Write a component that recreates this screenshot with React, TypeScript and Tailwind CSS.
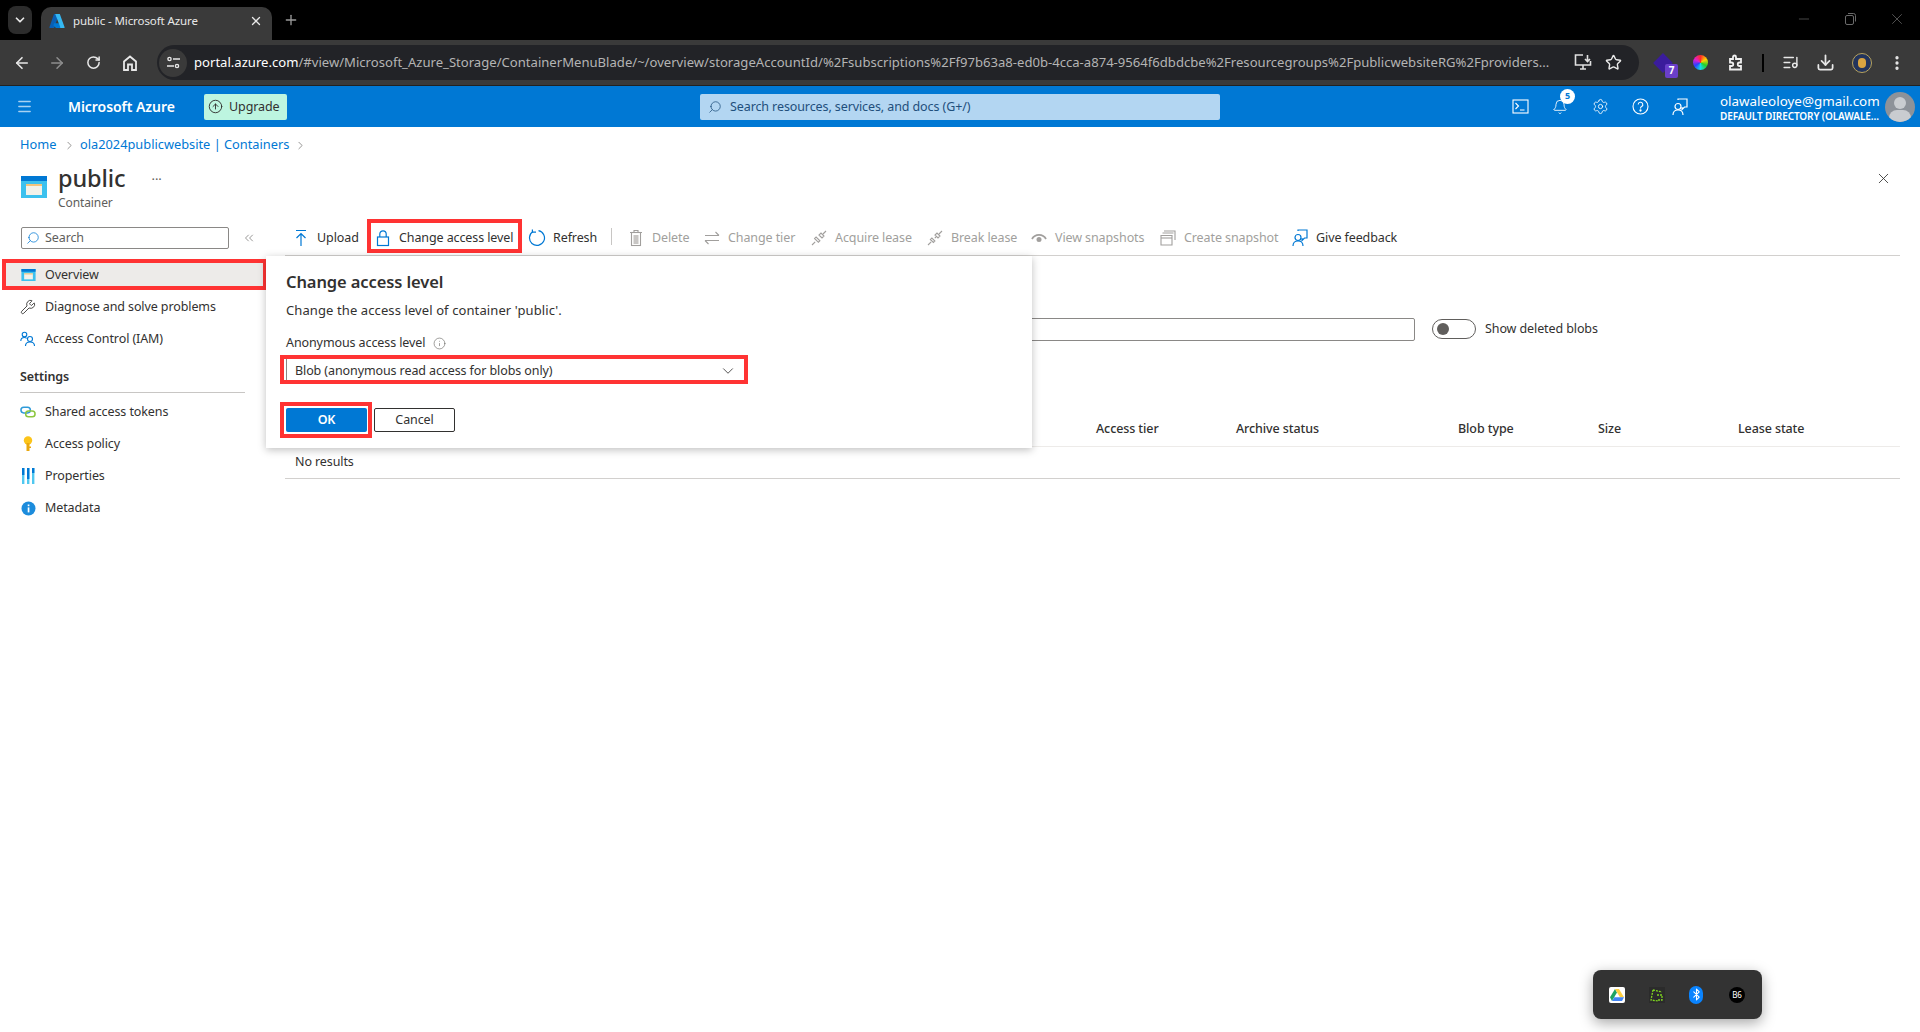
import React from "react";
import {
  ArrowLeft, ArrowRight, RotateCw, Star, X, Plus, ChevronDown, ChevronRight, Menu, Bell, Settings, Info, Search, Bluetooth, ListMusic, Download, EllipsisVertical, Wrench, ChevronsLeft, Minus, ArrowUpCircle,
} from "lucide-react";

const AzureLogo = () => (
  <svg width="16" height="16" viewBox="0 0 16 16">
    <path d="M5.6 1h4.4L5.3 14.4a.8.8 0 0 1-.8.6H1a.6.6 0 0 1-.6-.8L4.8 1.6A.8.8 0 0 1 5.6 1z" fill="#0a5fb4" />
    <path d="M11.9 10.2H5l-.6 2.2 2.6 2.6h6.3z" fill="#0078d4" />
    <path d="M6.2 1h4.6l4.8 13.2a.6.6 0 0 1-.6.8h-4.2a.8.8 0 0 0 .5-.8z" fill="#35b8f2" />
  </svg>
);

const ContainerIcon = ({ w, h }: { w: number; h: number }) => (
  <svg width={w} height={h} viewBox="0 0 26 22">
    <rect x="0" y="0" width="26" height="22" fill="#3cc1ee" />
    <rect x="0" y="0" width="26" height="5" fill="#0078d4" />
    <rect x="5" y="8" width="16" height="11" fill="#f2f2ea" />
    <rect x="5" y="8" width="16" height="2" fill="#f3c47c" />
  </svg>
);

const ChromeBtn = ({ children, className }: { children: React.ReactNode; className?: string }) => (
  <span className={"flex h-[24px] w-[24px] shrink-0 items-center justify-center " + (className ?? "")}>{children}</span>
);

const Upload = () => (
  <svg width="16" height="18" viewBox="0 0 16 18" fill="none" stroke="#0078d4" strokeWidth="1.2">
    <path d="M3 1.5h10M8 17V5M3.5 9L8 4.5 12.5 9" />
  </svg>
);
const Lock = () => (
  <svg width="16" height="18" viewBox="0 0 16 18" fill="none" stroke="#0078d4" strokeWidth="1.2">
    <rect x="2.5" y="8" width="11" height="8.5" />
    <path d="M4.8 8V5a3.2 3.2 0 0 1 6.4 0v3" />
  </svg>
);
const Refresh = () => (
  <svg width="18" height="18" viewBox="0 0 18 18" fill="none" stroke="#0078d4" strokeWidth="1.2" className="shrink-0">
    <path d="M5 2.6A7.5 7.5 0 1 0 10.5 1.6" />
    <path d="M4.4 0.6V3.2H8" />
  </svg>
);
const Trash = () => (
  <svg width="16" height="18" viewBox="0 0 16 18" fill="none" stroke="#a19f9d" strokeWidth="1.1">
    <path d="M2 3.5h12M6 3.5V1.5h4v2" />
    <rect x="3.5" y="3.5" width="9" height="13" />
    <rect x="5.5" y="6" width="5" height="9" fill="#c8c6c4" stroke="none" />
  </svg>
);
const Swap = () => (
  <svg width="16" height="16" viewBox="0 0 16 16" fill="none" stroke="#a19f9d" strokeWidth="1.1">
    <path d="M1 5.5h14M11.5 2l3.5 3.5M15 10.5H1M4.5 14L1 10.5" />
  </svg>
);
const Plug = ({ broken }: { broken?: boolean }) => (
  <svg width="16" height="16" viewBox="0 0 16 16" fill="none" stroke="#a19f9d" strokeWidth="1.1">
    <path d="M1 15l3.2-3.2" />
    <path d={broken ? "M3.4 9.5l3 3 1.5-1.5-3-3zM9 7l-1.2 1.2" : "M3.6 8.5l3.8 3.8 1.5-1.5-3.8-3.8z"} />
    <path d="M8 5l3 3 2-2-3-3zM12 4l3-3" />
  </svg>
);
const Eye = () => (
  <svg width="16" height="12" viewBox="0 0 16 12" fill="none">
    <path d="M1 7a8 8 0 0 1 14 0" stroke="#a19f9d" strokeWidth="1.8" />
    <circle cx="8" cy="7.5" r="2.5" fill="#a19f9d" />
  </svg>
);
const Snapshot = () => (
  <svg width="16" height="16" viewBox="0 0 16 16" fill="none" stroke="#a19f9d" strokeWidth="1.1">
    <path d="M4 1h11v9M2.5 3h11M1 5.5h11v9.5H1z" />
    <path d="M1 8h11" />
  </svg>
);
const Feedback = ({ color, w = 16, h = 18 }: { color: string; w?: number; h?: number }) => (
  <svg width={w} height={h} viewBox="0 0 16 18" fill="none" stroke={color} strokeWidth="1.2">
    <circle cx="6" cy="8.5" r="3" />
    <path d="M1 17c0-3 2-5 5-5s5 2 5 5" />
    <path d="M6 2V1h9v8h-2.5L10 11.5V9" />
  </svg>
);

const ToolItem = ({ icon, label, w, disabled, boxed }: { icon: React.ReactNode; label: string; w: number; disabled?: boolean; boxed?: boolean }) => (
  <div className="relative mt-[1px] flex h-[36px] shrink-0 items-center gap-[8px]">
    {boxed && <span className="absolute left-[-8px] right-[-9px] top-[-1px] h-[34px] border-[4px] border-[#ff3333]" />}
    <span className="flex h-[18px] w-[16px] items-center justify-center">{icon}</span>
    <span style={{ width: w }} className={"whitespace-nowrap " + (disabled ? "text-[#a19f9d]" : "text-[#323130]")}>{label}</span>
  </div>
);

const NavRow = ({ icon, label }: { icon: React.ReactNode; label: string }) => (
  <div className="flex h-[32px] items-center pl-[20px] text-[#323130]">
    <span className="flex w-[16px] items-center justify-center">{icon}</span>
    <span className="ml-[9px] whitespace-nowrap">{label}</span>
  </div>
);

const Iam = () => (
  <svg width="16" height="16" viewBox="0 0 16 16" fill="none" stroke="#0078d4" strokeWidth="1.1">
    <circle cx="4.5" cy="3.5" r="2.3" />
    <path d="M0.8 10c0-2 1.5-3.5 3.7-3.5 1 0 1.6.3 2.2.8" />
    <circle cx="10" cy="8" r="2.5" />
    <path d="M5.5 15c0-2.5 2-4 4.5-4s4.5 1.5 4.5 4" />
  </svg>
);
const Tokens = () => (
  <svg width="17" height="12" viewBox="0 0 17 12" fill="none" strokeWidth="1.6">
    <rect x="1" y="1" width="10" height="6" rx="3" stroke="#2f9bd9" />
    <rect x="6" y="5" width="10" height="6" rx="3" stroke="#8cc63f" />
  </svg>
);
const Key = () => (
  <svg width="12" height="16" viewBox="0 0 12 16">
    <circle cx="6" cy="4.5" r="4.2" fill="#fcc419" />
    <rect x="4.5" y="7" width="3" height="8" fill="#e9a80e" />
    <rect x="7" y="10.5" width="2" height="1.5" fill="#e9a80e" />
  </svg>
);
const Bars = () => (
  <svg width="14" height="16" viewBox="0 0 14 16">
    <rect x="1" y="0" width="2.4" height="16" fill="#50c8f0" />
    <rect x="1" y="0" width="2.4" height="7" fill="#0078d4" />
    <rect x="6" y="0" width="2.4" height="16" fill="#50c8f0" />
    <rect x="6" y="0" width="2.4" height="11" fill="#0078d4" />
    <rect x="11" y="0" width="2.4" height="16" fill="#50c8f0" />
    <rect x="11" y="0" width="2.4" height="5" fill="#0078d4" />
  </svg>
);
const InfoFilled = () => (
  <svg width="15" height="15" viewBox="0 0 15 15">
    <circle cx="7.5" cy="7.5" r="7" fill="#1c8cdc" />
    <rect x="6.7" y="6.4" width="1.7" height="5" fill="#fff" />
    <rect x="6.7" y="3.5" width="1.7" height="1.7" fill="#fff" />
  </svg>
);

export default function App() {
  return (
    <div className="flex h-[1032px] w-[1920px] flex-col overflow-hidden bg-white font-['Noto_Sans',sans-serif] text-[12.5px] tracking-[-0.1px] text-[#323130]">
      {/* Tab strip */}
      <div className="flex h-[40px] shrink-0 items-end bg-black pl-[8px] text-[#e8e8e8]">
        <div className="mb-[6px] flex h-[28px] w-[24px] shrink-0 items-center justify-center rounded-[8px] bg-[#2c2c2c]">
          <ChevronDown size={14} strokeWidth={3} />
        </div>
        <div className="ml-[9px] flex h-[33px] w-[231px] shrink-0 items-center rounded-t-[10px] bg-[#3a3a3a] pb-[6px] pl-[8px] pr-[9px]">
          <AzureLogo />
          <span className="ml-[8px] flex-1 text-[11.5px]">public - Microsoft Azure</span>
          <X size={14} strokeWidth={2.2} />
        </div>
        <Plus size={16} className="mb-[12px] ml-[11px] text-[#9a9a9a]" />
        <div className="mb-[12px] ml-auto flex items-center gap-[31px] pr-[14px] text-[#6a6a6a]">
          <Minus size={16} strokeWidth={1} />
          <svg width="14" height="14" viewBox="0 0 14 14" fill="none" stroke="#6a6a6a"><rect x="2.5" y="3.5" width="8" height="9" rx="1.5" /><path d="M5 1.5h5.5a2 2 0 0 1 2 2v6" /></svg>
          <X size={18} strokeWidth={1} />
        </div>
      </div>

      {/* Chrome toolbar */}
      <div className="flex h-[46px] shrink-0 items-center border-b border-[#222] bg-[#3a3a3a] pl-[10px] pr-[10px] text-[#e8e8e8]">
        <ChromeBtn><ArrowLeft size={18} strokeWidth={2.2} /></ChromeBtn>
        <ChromeBtn className="ml-[11px] text-[#8e8e8e]"><ArrowRight size={18} /></ChromeBtn>
        <ChromeBtn className="ml-[12px]"><RotateCw size={15} strokeWidth={2.4} /></ChromeBtn>
        <ChromeBtn className="ml-[13px]">
          <svg width="16" height="16" viewBox="0 0 16 16" fill="none" stroke="#e8e8e8" strokeWidth="1.8"><path d="M2 15V6.5L8 1.5l6 5V15H10V9.5H6V15z" /></svg>
        </ChromeBtn>
        <div className="ml-[15px] flex h-[35px] w-[1482px] shrink-0 items-center rounded-full bg-[#222327] pl-[2px]">
          <span className="flex h-[28px] w-[28px] shrink-0 items-center justify-center rounded-full bg-[#3a3a3a]">
            <svg width="15" height="13" viewBox="0 0 15 13" fill="none" stroke="#e8e8e8" strokeWidth="1.4"><circle cx="3.5" cy="3" r="1.6" /><path d="M7 3h7M1 10h7" /><circle cx="11" cy="10" r="1.6" /></svg>
          </span>
          <span className="ml-[7px] w-[1368px] shrink-0 overflow-hidden whitespace-nowrap text-[13.1px] tracking-normal text-[#b4b4b4]">
            <span className="text-white">portal.azure.com</span>/#view/Microsoft_Azure_Storage/ContainerMenuBlade/~/overview/storageAccountId/%2Fsubscriptions%2Ff97b63a8-ed0b-4cca-a874-9564f6dbdcbe%2Fresourcegroups%2FpublicwebsiteRG%2Fproviders...
          </span>
          <span className="ml-[11px] flex w-[20px] shrink-0 justify-center">
            <svg width="18" height="17" viewBox="0 0 18 17" fill="none" stroke="#e0e0e0" strokeWidth="1.6"><path d="M9 1H1.5v10h15V7M6 15h6M9 11v4M13.5 1v6M11 5l2.5 2.5L16 5" /></svg>
          </span>
          <Star size={17} strokeWidth={2} className="ml-[12px] shrink-0" />
        </div>
        <span className="relative ml-[12px] flex h-[24px] w-[24px] shrink-0 items-center justify-center">
          <span className="h-[14px] w-[14px] rotate-45 bg-[#3a1c9c]" />
          <span className="absolute bottom-[-3px] right-[-3px] flex h-[14px] w-[13px] items-center justify-center rounded-[2px] bg-[#6a3fc9] text-[10px] font-bold text-white">7</span>
        </span>
        <span className="ml-[13px] flex h-[24px] w-[24px] shrink-0 items-center justify-center">
          <span className="h-[15px] w-[15px] rounded-full bg-[conic-gradient(#ff2a2a,#ffd400,#22d02a,#14d8e8,#2a40ff,#e020d0,#ff2a2a)]" />
        </span>
        <span className="ml-[11px] flex h-[24px] w-[24px] shrink-0 items-center justify-center">
          <svg width="17" height="17" viewBox="0 0 17 17" fill="none" stroke="#f0f0f0" strokeWidth="1.8"><path d="M3 5h3V3a1.5 1.5 0 0 1 3 0v2h5v3.5h-1.5a1.7 1.7 0 0 0 0 3.5H14v3.5H3V12h1.5a1.7 1.7 0 0 0 0-3.5H3z" /></svg>
        </span>
        <span className="ml-[15px] h-[18px] w-[2px] shrink-0 bg-black" />
        <ChromeBtn className="ml-[14px]"><ListMusic size={17} strokeWidth={2} /></ChromeBtn>
        <ChromeBtn className="ml-[11px]"><Download size={19} strokeWidth={2.2} /></ChromeBtn>
        <span className="ml-[15px] flex h-[20px] w-[20px] shrink-0 items-center justify-center rounded-full border border-[#b8a35c] bg-[#23345c]"><span className="h-[10px] w-[8px] rounded-full bg-[#d9a441]" /></span>
        <ChromeBtn className="ml-[13px]"><EllipsisVertical size={18} strokeWidth={2.4} /></ChromeBtn>
      </div>

      {/* Azure nav */}
      <div className="flex h-[41px] shrink-0 items-center bg-[#0078d4] text-white">
        <Menu size={17} className="ml-[16px] shrink-0 text-[#a8d2f2]" />
        <span className="ml-[35px] w-[109px] shrink-0 whitespace-nowrap text-[14px] font-semibold tracking-[-0.05px]">Microsoft Azure</span>
        <div className="ml-[27px] flex h-[26px] w-[83px] shrink-0 items-center rounded-[2px] bg-[#bdf5e0] pl-[4px] text-[#323130]">
          <ArrowUpCircle size={15} strokeWidth={1.5} />
          <span className="ml-[6px] mt-[1px]">Upgrade</span>
        </div>
        <div className="ml-[413px] flex h-[26px] w-[520px] shrink-0 items-center rounded-[2px] bg-[#b3d6f2] pl-[8px] text-[#1f4f7c]">
          <Search size={14} strokeWidth={1.3} className="-scale-x-100" />
          <span className="ml-[8px] mt-[1px]">Search resources, services, and docs (G+/)</span>
        </div>
        <div className="ml-[285px] flex h-[30px] w-[30px] shrink-0 items-center justify-center">
          <svg width="17" height="15" viewBox="0 0 17 15" fill="none" stroke="#fff" strokeWidth="1.1"><rect x="1" y="1" width="15" height="13" /><path d="M3.5 4l3 3-3 3M8 11h4.5" /></svg>
        </div>
        <div className="relative ml-[10px] flex h-[30px] w-[30px] shrink-0 items-center justify-center">
          <Bell size={16} strokeWidth={1.3} />
          <span className="absolute right-[0px] top-[-3px] flex h-[15px] w-[15px] items-center justify-center rounded-full bg-white text-[9px] font-bold text-[#0078d4]">5</span>
        </div>
        <div className="ml-[10px] flex h-[30px] w-[30px] shrink-0 items-center justify-center"><Settings size={17} strokeWidth={1.2} /></div>
        <div className="ml-[10px] flex h-[30px] w-[30px] shrink-0 items-center justify-center">
          <svg width="17" height="17" viewBox="0 0 17 17" fill="none" stroke="#fff" strokeWidth="1.1"><circle cx="8.5" cy="8.5" r="7.5" /><path d="M6.2 6.6a2.3 2.3 0 1 1 3.4 2c-.8.4-1.1 1-1.1 1.9" /><circle cx="8.5" cy="12.5" r=".6" fill="#fff" /></svg>
        </div>
        <div className="ml-[10px] flex h-[30px] w-[30px] shrink-0 items-center justify-center"><Feedback color="#fff" /></div>
        <div className="ml-[25px] mt-[5px] flex w-[160px] shrink-0 flex-col items-start leading-[15px]">
          <span className="whitespace-nowrap text-[13.4px] tracking-normal">olawaleoloye@gmail.com</span>
          <span className="whitespace-nowrap text-[10px] font-semibold">DEFAULT DIRECTORY (OLAWALE...</span>
        </div>
        <div className="relative ml-[5px] h-[30px] w-[30px] shrink-0 overflow-hidden rounded-full bg-[#8d9299]">
          <span className="absolute left-[9px] top-[5px] h-[12px] w-[12px] rounded-full bg-[#c9ccd0]" />
          <span className="absolute left-[4px] top-[18px] h-[16px] w-[22px] rounded-full bg-[#c9ccd0]" />
        </div>
      </div>

      {/* Portal content */}
      <div className="relative flex flex-1 flex-col">
        <div className="flex h-[36px] shrink-0 items-center pl-[20px] text-[12.8px] tracking-normal text-[#0078d4]">
          <span className="w-[38px] whitespace-nowrap">Home</span>
          <ChevronRight size={13} className="ml-[5px] text-[#605e5c]" strokeWidth={1.2} />
          <span className="ml-[4px] w-[210px] whitespace-nowrap">ola2024publicwebsite | Containers</span>
          <ChevronRight size={13} className="ml-[4px] text-[#605e5c]" strokeWidth={1.2} />
        </div>

        <div className="flex h-[56px] shrink-0 items-start pl-[21px] pr-[28px]">
          <div className="mt-[13px]"><ContainerIcon w={26} h={22} /></div>
          <div className="ml-[11px] flex flex-col">
            <span className="h-[30px] text-[23.5px] font-medium leading-[30px]">public</span>
            <span className="mt-[2px] text-[12px] leading-[16px] text-[#605e5c]">Container</span>
          </div>
          <span className="ml-[26px] mt-[8px] text-[13px] leading-[16px] text-[#605e5c]">···</span>
          <X size={17} strokeWidth={1.2} className="ml-auto mt-[7px] text-[#323130]" />
        </div>

        <div className="flex flex-1">
          {/* Sidebar */}
          <div className="flex w-[268px] shrink-0 flex-col">
            <div className="ml-[21px] mt-[8px] flex h-[22px] items-center">
              <div className="flex h-[22px] w-[208px] items-center rounded-[2px] border border-[#8a8886] pl-[4px] text-[#605e5c]">
                <Search size={14} strokeWidth={1.3} className="-scale-x-100 text-[#0078d4]" />
                <span className="ml-[5px] mt-[1px]">Search</span>
              </div>
              <ChevronsLeft size={14} strokeWidth={1.1} className="ml-[13px] text-[#605e5c]" />
            </div>
            <div className="ml-[2px] mt-[10px] flex h-[31px] w-[265px] items-center border-[4px] border-[#ff3333] bg-[#edebe9] pl-[15px]">
              <ContainerIcon w={15} h={12} />
              <span className="ml-[9px] mt-[1px] whitespace-nowrap">Overview</span>
            </div>
            <div className="mt-[1px]">
              <NavRow icon={<Wrench size={16} strokeWidth={1.3} />} label="Diagnose and solve problems" />
              <NavRow icon={<Iam />} label="Access Control (IAM)" />
            </div>
            <div className="ml-[20px] mt-[12px] h-[26px] w-[225px] border-b border-[#c8c6c4] font-semibold leading-[20px]">Settings</div>
            <div className="mt-[3px]">
              <NavRow icon={<Tokens />} label="Shared access tokens" />
              <NavRow icon={<Key />} label="Access policy" />
              <NavRow icon={<Bars />} label="Properties" />
              <NavRow icon={<InfoFilled />} label="Metadata" />
            </div>
          </div>

          {/* Main */}
          <div className="flex flex-1 flex-col pl-[17px] pr-[20px]">
            <div className="flex h-[37px] shrink-0 items-start gap-[16px] border-b border-[#d2d0ce] pl-[8px]">
              <ToolItem icon={<Upload />} label="Upload" w={42} />
              <ToolItem icon={<Lock />} label="Change access level" w={114} boxed />
              <ToolItem icon={<Refresh />} label="Refresh" w={42} />
              <span className="mt-[9px] h-[17px] w-px bg-[#c8c6c4]" />
              <ToolItem icon={<Trash />} label="Delete" w={36} disabled />
              <ToolItem icon={<Swap />} label="Change tier" w={67} disabled />
              <ToolItem icon={<Plug />} label="Acquire lease" w={76} disabled />
              <ToolItem icon={<Plug broken />} label="Break lease" w={64} disabled />
              <ToolItem icon={<Eye />} label="View snapshots" w={89} disabled />
              <ToolItem icon={<Snapshot />} label="Create snapshot" w={92} disabled />
              <ToolItem icon={<Feedback color="#0078d4" />} label="Give feedback" w={81} />
            </div>

            <div className="mt-[61px] flex h-[24px] shrink-0 items-center">
              <div className="h-[23px] w-[1130px] rounded-[2px] border border-[#8a8886]" />
              <div className="ml-[17px] flex h-[20px] w-[44px] items-center rounded-full border border-[#605e5c] pl-[4px]">
                <span className="h-[12px] w-[12px] rounded-full bg-[#605e5c]" />
              </div>
              <span className="ml-[9px] mt-[1px] whitespace-nowrap text-[#323130]">Show deleted blobs</span>
            </div>

            <div className="mt-[78px] flex h-[28px] shrink-0 items-start border-b border-[#edebe9] font-medium">
              <span className="ml-[811px] w-[140px] leading-[20px]">Access tier</span>
              <span className="w-[222px] leading-[20px]">Archive status</span>
              <span className="w-[140px] leading-[20px]">Blob type</span>
              <span className="w-[140px] leading-[20px]">Size</span>
              <span className="leading-[20px]">Lease state</span>
            </div>
            <div className="flex h-[32px] shrink-0 items-center border-b border-[#d2d0ce] pl-[10px]">No results</div>
          </div>
        </div>

        {/* Dialog */}
        <div className="absolute left-[266px] top-[129px] flex h-[192px] w-[766px] flex-col bg-white pl-[20px] shadow-[0_2px_8px_rgba(0,0,0,0.25)]">
          <span className="mt-[14px] text-[16.5px] font-semibold leading-[24px]">Change access level</span>
          <span className="mt-[6px] text-[13px] leading-[20px] tracking-[0.1px]">Change the access level of container 'public'.</span>
          <div className="mt-[13px] flex h-[20px] items-center">
            <span>Anonymous access level</span>
            <Info size={13} strokeWidth={1.1} className="ml-[8px] text-[#605e5c]" />
          </div>
          <div className="relative mt-[6px] flex h-[24px] w-[456px] items-center border-l border-[#8a8886] pl-[8px] pr-[5px]">
            <span className="absolute left-[-7px] right-[-6px] top-[-4px] h-[29px] border-[4px] border-[#ff3333]" />
            <span className="flex-1 whitespace-nowrap">Blob (anonymous read access for blobs only)</span>
            <ChevronDown size={18} strokeWidth={1.1} />
          </div>
          <div className="mt-[25px] flex gap-[7px]">
            <div className="relative flex h-[24px] w-[81px] items-center justify-center rounded-[2px] bg-[#0078d4] font-semibold text-white">
              <span className="absolute left-[-6px] right-[-5px] top-[-6px] h-[36px] border-[4px] border-[#ff3333]" />
              OK
            </div>
            <div className="flex h-[24px] w-[81px] items-center justify-center rounded-[2px] border border-[#323130]">Cancel</div>
          </div>
        </div>

        {/* Floating tray */}
        <div className="absolute left-[1593px] top-[843px] flex h-[49px] w-[169px] items-center gap-[24px] rounded-[8px] bg-[#333333] pl-[16px] shadow-[0_4px_14px_rgba(0,0,0,0.35)]">
          <span className="flex h-[16px] w-[16px] items-center justify-center rounded-[2px] bg-white">
            <svg width="14" height="12" viewBox="0 0 14 12"><path d="M5 0L0 8.2 2 12 7 3.6z" fill="#1ea362" /><path d="M5 0h4l5 8.2H10z" fill="#ffcf3f" /><path d="M2 12l2.3-3.8H14L12 12z" fill="#4285f4" /></svg>
          </span>
          <span className="flex h-[16px] w-[16px] items-center justify-center bg-[#2b2b2b]">
            <svg width="14" height="14" viewBox="0 0 14 14" fill="none" stroke="#7ed321" strokeWidth="1.3" strokeDasharray="2 1"><path d="M3 2l9 2M3 2L1 12l7 1M7 7l5 0 0 5-5 0" /></svg>
          </span>
          <span className="flex h-[18px] w-[14px] items-center justify-center rounded-full bg-[#0a84ff] text-white"><Bluetooth size={13} strokeWidth={2} /></span>
          <span className="ml-[2px] flex h-[16px] w-[16px] items-center justify-center rounded-full bg-black text-[8px] text-white">B6</span>
        </div>
      </div>
    </div>
  );
}
